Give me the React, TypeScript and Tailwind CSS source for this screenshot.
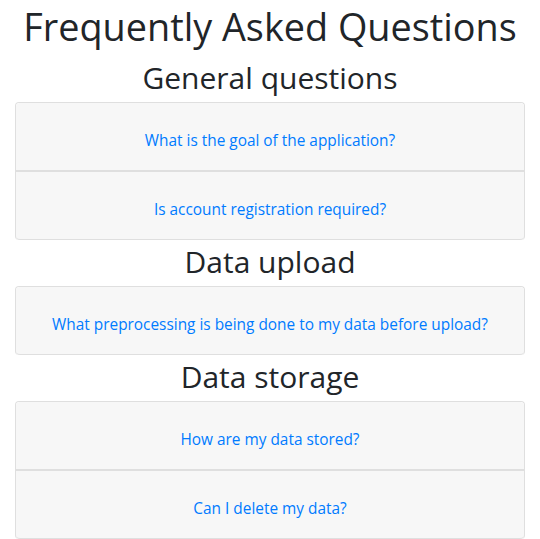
import React from "react"

type Section = {
  title: string
  questions: string[]
}

const sections: Section[] = [
  {
    title: "General questions",
    questions: ["What is the goal of the application?", "Is account registration required?"],
  },
  {
    title: "Data upload",
    questions: ["What preprocessing is being done to my data before upload?"],
  },
  {
    title: "Data storage",
    questions: ["How are my data stored?", "Can I delete my data?"],
  },
]

function FaqItem({ question, first, last }: { question: string; first: boolean; last: boolean }) {
  return (
    <div
      className={
        "border-x border-t border-[#dfdfdf] bg-white " +
        (first ? "rounded-t " : "") +
        (last ? "rounded-b" : "")
      }
    >
      <div
        className={
          "flex h-[68px] items-center justify-center border-b border-[#dfdfdf] bg-[#f7f7f7] pt-2 " +
          (first ? "rounded-t " : "") +
          (last ? "rounded-b" : "")
        }
      >
        <button className="cursor-pointer px-3 text-[15.4px] leading-6 text-[#007bff] hover:underline">
          {question}
        </button>
      </div>
    </div>
  )
}

export default function App() {
  return (
    <div className="min-h-screen bg-white px-[15px] text-[#212529] [font-family:'Open_Sans',sans-serif]">
      <h1 className="mb-2 h-[48px] whitespace-nowrap text-center text-[37.8px] leading-[54px] font-normal">
        Frequently Asked Questions
      </h1>
      {sections.map((section) => (
        <div key={section.title}>
          <h2 className="mb-2 h-[38px] text-center text-[30px] leading-[43px] font-normal">
            {section.title}
          </h2>
          <div>
            {section.questions.map((q, i) => (
              <FaqItem
                key={q}
                question={q}
                first={i === 0}
                last={i === section.questions.length - 1}
              />
            ))}
          </div>
        </div>
      ))}
    </div>
  )
}
